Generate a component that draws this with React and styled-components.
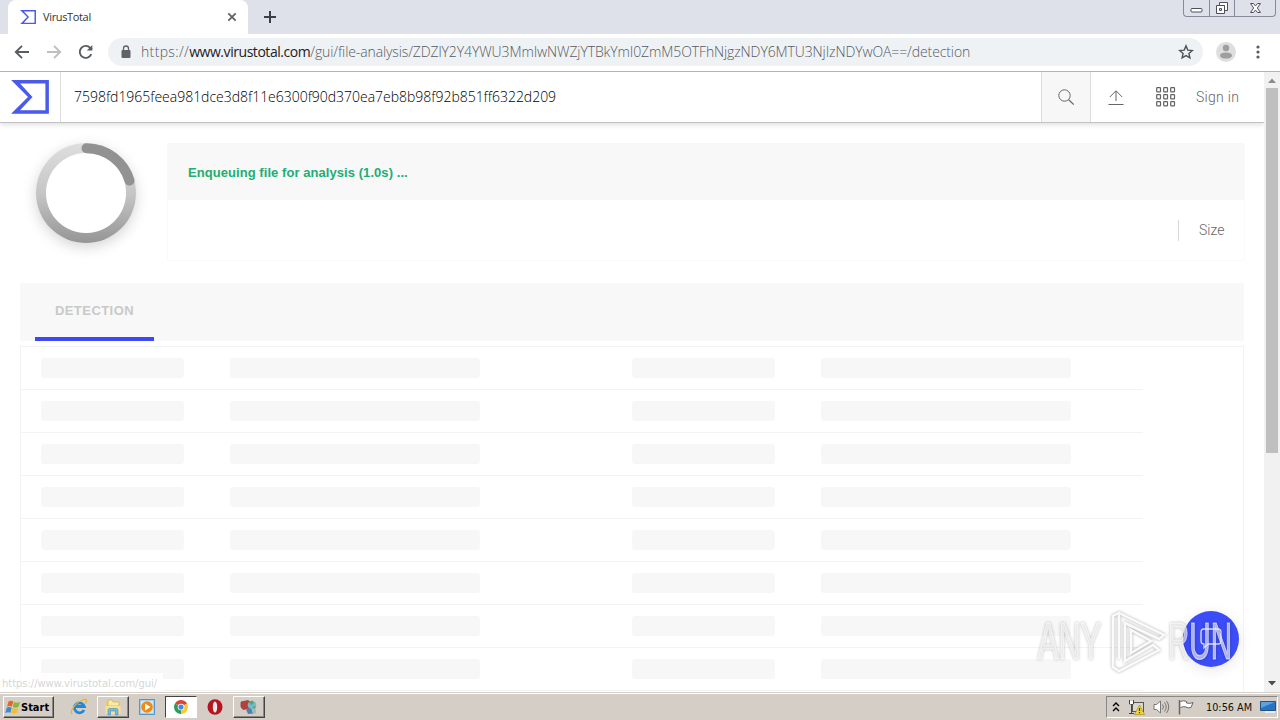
import React from "react";
import styled, { createGlobalStyle } from "styled-components";

function App() {
  const rows = [1, 2, 3, 4, 5, 6, 7, 8];

  return (
    <Screen>
      <GlobalStyle />
      <TabStrip>
        <Tab>
          <VtLogo size={16} />
          <TabTitle>VirusTotal</TabTitle>
          <svg width="10" height="10" viewBox="0 0 10 10">
            <path d="M1.3 1.3l7.4 7.4M8.7 1.3L1.3 8.7" stroke="#5f6368" strokeWidth="1.8" />
          </svg>
        </Tab>
        <NewTab>
          <svg width="12" height="12" viewBox="0 0 12 12">
            <path d="M6 0v12M0 6h12" stroke="#3c4043" strokeWidth="2" />
          </svg>
        </NewTab>
        <WindowButtons>
          <WindowButton $width={25}>
            <svg width="13" height="16" viewBox="0 0 13 16">
              <rect x="1" y="8.5" width="11" height="3.5" rx="1" fill="#fff" stroke="#4c505c" />
            </svg>
          </WindowButton>
          <WindowButton $width={25}>
            <svg width="14" height="16" viewBox="0 0 14 16" fill="#fff" stroke="#4c505c">
              <path d="M4.5 2.5h8v8h-3v-5h-5z" />
              <path fillRule="evenodd" d="M1.500 5.500h8v8h-8zM4.500 8.500h2v2h-2z" />
            </svg>
          </WindowButton>
          <WindowButton $width={41}>
            <svg width="13" height="16" viewBox="0 0 13 16">
              <path d="M1.500 3.500h3l2 2.500 2-2.500h3l-3.200 4.500 3.200 4.500h-3l-2-2.500-2 2.500h-3l3.200-4.500z" fill="#fff" stroke="#4c505c" />
            </svg>
          </WindowButton>
        </WindowButtons>
      </TabStrip>

      <Toolbar>
        <NavIcon $color="#5a5d60">
          <path d="M15 8H2M8 1.800L1.800 8 8 14.200" />
        </NavIcon>
        <NavIcon $color="#bdbfc1">
          <path d="M1 8h13M8 1.800L14.200 8 8 14.200" />
        </NavIcon>
        <NavIcon $color="#5a5d60">
          <path d="M13.300 10.200A6 6 0 1 1 12.200 3.800L14 5.500" />
          <path d="M14.300 1v5.500H8.800z" fill="#5a5d60" stroke="none" />
        </NavIcon>
        <AddressBar>
          <svg width="10" height="14" viewBox="0 0 10 14">
            <rect x="0.500" y="5" width="9" height="8" rx="1" fill="#5f6368" />
            <path d="M2.500 5.500V3.500a2.500 2.500 0 0 1 5 0v2" fill="none" stroke="#5f6368" strokeWidth="1.300" />
          </svg>
          <Url>
            <i>https://</i><b>www.virustotal.com</b>/gui/file-analysis/ZDZlY2Y4YWU3MmIwNWZjYTBkYmI0ZmM5OTFhNjgzNDY6MTU3NjIzNDYwOA==/detection
          </Url>
          <svg width="16" height="16" viewBox="0 0 16 16">
            <path d="M8 1.900l1.800 4.200 4.500.4-3.400 3 1 4.400L8 11.600l-3.900 2.300 1-4.400-3.400-3 4.500-.4z" fill="none" stroke="#4f5357" strokeWidth="1.400" />
          </svg>
        </AddressBar>
        <svg width="20" height="20" viewBox="0 0 20 20">
          <circle cx="10" cy="10" r="10" fill="#dedede" />
          <circle cx="10" cy="6" r="3.200" fill="#9e9e9e" />
          <ellipse cx="10" cy="13.500" rx="6" ry="3.100" fill="#9e9e9e" />
        </svg>
        <MenuDots viewBox="0 0 4 14">
          <circle cx="2" cy="2" r="1.600" />
          <circle cx="2" cy="7" r="1.600" />
          <circle cx="2" cy="12" r="1.600" />
        </MenuDots>
      </Toolbar>

      <Viewport>
        <Page>
          <Header>
            <LogoBox>
              <VtLogo size={38} />
            </LogoBox>
            <Hash>7598fd1965feea981dce3d8f11e6300f90d370ea7eb8b98f92b851ff6322d209</Hash>
            <SearchBox>
              <svg width="16" height="16" viewBox="0 0 16 16" fill="none" stroke="#666">
                <circle cx="6.500" cy="6.500" r="5.700" />
                <path d="M10.700 10.700l5 4.800" strokeWidth="1.200" />
              </svg>
            </SearchBox>
            <HeaderLinks>
              <svg width="16" height="16" viewBox="0 0 16 16" fill="none" stroke="#666">
                <path d="M8 12V2M1.800 8L8 1.800 14.200 8M.5 15.500h15" />
              </svg>
              <AppsIcon />
              <SignIn>Sign in</SignIn>
            </HeaderLinks>
          </Header>

          <Summary>
            <Spinner>
              <svg width="100" height="100" viewBox="0 0 100 100" fill="none">
                <path d="M50.500 5.200A45 45 0 0 1 93.500 37.500" stroke="#929292" strokeWidth="10" strokeLinecap="round" />
              </svg>
            </Spinner>
            <FileCard>
              <Status>Enqueuing file for analysis (1.0s) ...</Status>
              <FileInfo>
                <Size>Size</Size>
              </FileInfo>
            </FileCard>
          </Summary>

          <Tabs>
            <DetectionTab>DETECTION</DetectionTab>
          </Tabs>

          <Table>
            {rows.map((row) => (
              <Row key={row}>
                <Bar $width={143} />
                <Bar $width={250} />
                <Bar $width={143} />
                <Bar $width={250} />
              </Row>
            ))}
          </Table>
          <ChatButton>
            <svg width="24" height="22" viewBox="0 0 24 22">
              <path d="M5 1h14q3 0 3 3v9q0 3-3 3H9l-4 4v-4q-3 0-3-3V4q0-3 3-3z" fill="none" stroke="#dfe3ff" strokeWidth="1.300" />
            </svg>
          </ChatButton>
          <LinkHint>https://www.virustotal.com/gui/</LinkHint>
          <Watermark />
        </Page>
        <Scrollbar>
          <svg width="8" height="16" viewBox="0 0 8 16"><path d="M0 11h8L4 6.500z" fill="#8b8b8b" /></svg>
          <Thumb />
          <svg width="8" height="16" viewBox="0 0 8 16"><path d="M0 5h8l-4 4.500z" fill="#4c4c4c" /></svg>
        </Scrollbar>
      </Viewport>

      <Taskbar>
        <StartButton>
          <WindowsFlag />
          Start
        </StartButton>
        <TaskIcons>
          <TaskItem>
            <svg width="18" height="18" viewBox="0 0 18 18" fill="none">
              <path d="M14 12a5 5 0 1 1 .3-3.500H5" stroke="#2387d8" strokeWidth="2.800" />
              <path d="M2 16C-1 13 6 4 14 1.500c3-.8 3 1.500 1.500 4" stroke="#e5b52c" strokeWidth="1.300" />
            </svg>
          </TaskItem>
          <TaskItem $raised>
            <svg width="18" height="18" viewBox="0 0 18 18">
              <path d="M2 3h5l1 2h7v11H2z" fill="#e9cf72" />
              <path d="M4 2h4l1 2h6v4H4z" fill="#f8eca9" stroke="#c9a544" strokeWidth=".6" />
              <path d="M1.500 8h15v8h-15z" fill="#f6e092" />
              <path d="M4 17v-5q0-1.500 1.500-1.500h7Q14 10.500 14 12v5h-2.500v-4h-5v4z" fill="#73bce0" stroke="#4b8db8" strokeWidth=".6" />
            </svg>
          </TaskItem>
          <TaskItem>
            <svg width="16" height="16" viewBox="0 0 16 16">
              <rect x=".5" y=".5" width="15" height="15" fill="#a5cdec" stroke="#5596cc" />
              <rect x="2" y="2" width="12" height="12" fill="#d5e8f5" />
              <circle cx="8" cy="8" r="5.800" fill="#f28a12" />
              <path d="M6 4.600v6.800L11.500 8z" fill="#fff" />
            </svg>
          </TaskItem>
          <TaskItem $pressed>
            <svg width="14" height="14" viewBox="0 0 16 16">
              <path d="M8 8L1.100 4A8 8 0 0 1 14.900 4z" fill="#db4437" />
              <path d="M8 8L14.900 4A8 8 0 0 1 8 16z" fill="#fcc934" />
              <path d="M8 8v8A8 8 0 0 1 1.100 4z" fill="#2b9d55" />
              <circle cx="8" cy="8" r="3.800" fill="#fff" />
              <circle cx="8" cy="8" r="2.900" fill="#4285f4" />
            </svg>
          </TaskItem>
          <TaskItem>
            <svg width="16" height="16" viewBox="0 0 16 16">
              <ellipse cx="8" cy="8" rx="7.500" ry="7.700" fill="#b51420" />
              <ellipse cx="8" cy="8" rx="2.200" ry="5.600" fill="#f1e7e5" />
            </svg>
          </TaskItem>
          <TaskItem $raised>
            <svg width="18" height="18" viewBox="0 0 18 18">
              <path d="M1 4l7-1.500 3 2V10l-8 1.500L1 9z" fill="#b8403a" stroke="#7f4a48" strokeWidth=".8" />
              <circle cx="12" cy="7" r="4.300" fill="#74b9cf" />
              <path d="M9 4l3-1.500L14 5l-3 2zM13 8l3 1-2 2.500z" fill="#58a55c" />
              <path d="M6 11.500l5-1 3 5-6 .5z" fill="#4a83ab" />
              <path d="M12 10.500l4 1v4l-4-1z" fill="#9fb8c4" />
            </svg>
          </TaskItem>
        </TaskIcons>
        <Tray>
          <svg width="8" height="12" viewBox="0 0 8 12">
            <path d="M1 5l3-3 3 3M1 10l3-3 3 3" fill="none" stroke="#000" strokeWidth="1.400" />
          </svg>
          <svg width="17" height="16" viewBox="0 0 17 16">
            <rect x="4.500" y="3.500" width="11" height="9" fill="#d8d8cc" stroke="#555" />
            <path d="M1.500 1v4h4V1M3.500 5v9M1 14.500h5" fill="none" stroke="#444" />
            <path d="M2 2h3v3H2z" fill="#fff" />
            <path d="M11.500 6l5 9.500h-10z" fill="#f5d330" stroke="#9b8420" strokeWidth=".6" />
            <path d="M11.500 9v3M11.500 13v1.200" stroke="#333" strokeWidth="1.200" />
          </svg>
          <svg width="17" height="16" viewBox="0 0 17 16" fill="none" stroke="#777">
            <path d="M1 5.500h2.500L7.500 2v12l-4-3.500H1z" fill="#fff" />
            <path d="M9.500 5.500q2 2.500 0 5M11.500 3.500q3.500 4.500 0 9M13.500 2q4.500 6 0 12" />
          </svg>
          <svg width="17" height="16" viewBox="0 0 17 16" fill="#fff" stroke="#666">
            <path d="M2.500 2.500q3-1.500 6 0v1.500q3 1 6.500-.5l-2 5q-3 1-5-.5-2.500-1-5.500.5" />
            <path d="M1.500 1v14.500" strokeWidth="1.500" />
          </svg>
          <Clock>10:56 AM</Clock>
          <svg width="16" height="16" viewBox="0 0 16 16">
            <path d="M.5 2.500h15v9H.5z" fill="#2674c5" stroke="#28527e" />
            <path d="M1 3h14L1 9z" fill="#5ba3df" />
            <path d="M5 12h10v2H5z" fill="#e9edf2" />
          </svg>
        </Tray>
      </Taskbar>
    </Screen>
  );
}

function VtLogo({ size }) {
  return (
    <svg width={size} height={size * 0.89} viewBox="0 0 38 34">
      <path d="M0 0h38v34H0l17-17zM9 3.500L21.500 17 9 30.500H34.500V3.500z" fill="#4a5aec" fillRule="evenodd" />
    </svg>
  );
}

function AppsIcon() {
  const cells = [0.7, 7.7, 14.7];
  return (
    <svg width="20" height="20" viewBox="0 0 20 20" fill="none" stroke="#626262" strokeWidth="1.200">
      {cells.map((y) => cells.map((x) => <rect key={x + "-" + y} x={x} y={y} width="3.800" height="4.200" rx=".6" />))}
    </svg>
  );
}

function WindowsFlag() {
  return (
    <svg width="16" height="15" viewBox="0 0 16 15">
      <path d="M3.500 1.500Q6 0 8.300 1.500L7 6.500Q4.500 5.300 2 6.700z" fill="#e8642b" />
      <path d="M9 2q2.500 1.500 6 0l-1.600 5q-3 1.300-5.600 0z" fill="#84b840" />
      <path d="M1.700 7.700q2.500-1.200 5 0l-1.300 5Q3 11.500.3 13z" fill="#3b8bd0" />
      <path d="M7.500 8q2.800 1.300 5.700 0l-1.500 5q-3 1.300-5.500 0z" fill="#f3bd2f" />
    </svg>
  );
}

function Watermark() {
  return (
    <WatermarkSvg viewBox="0 0 200 64">
      <text x="2" y="50.500" textLength="63" lengthAdjust="spacingAndGlyphs">ANY</text>
      <path d="M77 54V8l6-3v46M83 5l45 22-5 4-34-16v38l28-16 6 5-40 21-6-4V14" />
      <path d="M95 22l20 11-20 12z" />
      <text x="132" y="50.500" textLength="64" lengthAdjust="spacingAndGlyphs">RUN</text>
    </WatermarkSvg>
  );
}

export default App;

const GlobalStyle = createGlobalStyle`
  * {
    box-sizing: border-box;
  }
  body {
    margin: 0;
    overflow: hidden;
    font-family: "Liberation Sans", Arial, sans-serif;
  }
  svg {
    display: block;
    flex-shrink: 0;
  }
`;

const Screen = styled.div`
  display: flex;
  flex-direction: column;
  width: 1280px;
  height: 720px;
  background: #fff;
`;

const TabStrip = styled.div`
  display: flex;
  height: 34px;
  padding-left: 8px;
  background: #dee1e9;
`;

const Tab = styled.div`
  display: flex;
  align-items: center;
  width: 240px;
  padding: 0 11px 0 12px;
  border-radius: 8px 8px 0 0;
  background: #fff;
  box-shadow: 0 8px 0 #fff;
`;

const TabTitle = styled.div`
  flex: 1;
  margin-left: 7px;
  font-family: "Open Sans", sans-serif;
  font-size: 11px;
  letter-spacing: -0.35px;
  line-height: 14px;
  color: #333;
`;

const NewTab = styled.div`
  display: flex;
  align-items: center;
  margin-left: 16px;
`;

const WindowButtons = styled.div`
  display: flex;
  height: 17px;
  margin-left: auto;
  margin-right: 4px;
  border: 1px solid #858b98;
  border-top: none;
  border-radius: 0 0 4px 4px;
`;

const WindowButton = styled.div`
  display: flex;
  justify-content: center;
  width: ${(props) => props.$width}px;
  & + & {
    border-left: 1px solid #858b98;
  }
`;

const Toolbar = styled.div`
  display: flex;
  align-items: center;
  height: 38px;
  padding: 0 20px 2px 14px;
  border-bottom: 1px solid #b4b4b4;
  background: #fff;
  z-index: 1;
`;

const NavIcon = styled.svg.attrs({ viewBox: "0 0 16 16" })`
  width: 16px;
  height: 16px;
  margin-right: 16px;
  fill: none;
  stroke: ${(props) => props.$color};
  stroke-width: 1.9;
`;

const AddressBar = styled.div`
  display: flex;
  align-items: center;
  flex: 1;
  height: 28px;
  margin-right: 13px;
  margin-left: -2px;
  padding: 0 9px 0 13px;
  border-radius: 14px;
  background: #eff2f5;
`;

const Url = styled.div`
  flex: 1;
  margin-left: 10px;
  font-family: "Open Sans", sans-serif;
  font-size: 14px;
  font-weight: 300;
  letter-spacing: -0.11px;
  line-height: 20px;
  white-space: nowrap;
  color: #555a5f;
  > i {
    font-style: normal;
    letter-spacing: 0.35px;
  }
  > b {
    font-weight: 400;
    letter-spacing: -0.45px;
    color: #202124;
  }
`;

const MenuDots = styled.svg`
  width: 4px;
  height: 14px;
  margin-left: 20px;
  fill: #5a5d60;
`;

const Viewport = styled.div`
  display: flex;
  height: 620px;
`;

const Page = styled.div`
  position: relative;
  width: 1264px;
  height: 620px;
  overflow: hidden;
`;

const Header = styled.header`
  display: flex;
  height: 51px;
  border-bottom: 1px solid #c2c2c2;
  box-shadow: 0 2px 5px rgba(0, 0, 0, 0.12);
`;

const LogoBox = styled.div`
  display: flex;
  align-items: center;
  width: 61px;
  padding-left: 11px;
  border-right: 1px solid #dedede;
`;

const Hash = styled.div`
  flex: 1;
  padding-left: 13px;
  font-family: "Open Sans", sans-serif;
  font-size: 14px;
  font-weight: 300;
  letter-spacing: -0.02px;
  line-height: 50px;
  color: #000;
`;

const SearchBox = styled.div`
  display: flex;
  align-items: center;
  justify-content: center;
  width: 50px;
  border-left: 1px solid #dedede;
  border-right: 1px solid #dedede;
  background: #f7f7f7;
`;

const HeaderLinks = styled.div`
  display: flex;
  align-items: center;
  width: 173px;
  padding-left: 17px;
  gap: 32px;
`;

const SignIn = styled.div`
  margin-left: -12px;
  font-family: Roboto, sans-serif;
  font-size: 14px;
  font-weight: 300;
  letter-spacing: 0.3px;
  color: #666;
`;

const Summary = styled.section`
  display: flex;
  gap: 31px;
  padding: 20px 19px 0 36px;
`;

const Spinner = styled.div`
  width: 100px;
  height: 100px;
  border-radius: 50%;
  background:
    radial-gradient(circle, #fff 39.500px, transparent 40.500px),
    linear-gradient(#dfdfdf, #c6c6c6 50%, #959595);
  box-shadow: 0 4px 14px rgba(0, 0, 0, 0.17);
`;

const FileCard = styled.div`
  flex: 1;
  height: 118px;
  border: 1px solid #fafafa;
  border-top: none;
`;

const Status = styled.div`
  height: 57px;
  margin: 0 -1px;
  padding-left: 21px;
  background: #f8f8f8;
  font-size: 13px;
  font-weight: bold;
  letter-spacing: 0.06px;
  line-height: 59px;
  color: #22ad74;
`;

const FileInfo = styled.div`
  display: flex;
  justify-content: flex-end;
  padding: 20px 19px 0;
`;

const Size = styled.div`
  width: 47px;
  height: 21px;
  padding-left: 20px;
  border-left: 1px solid #d8d8d8;
  font-family: Roboto, sans-serif;
  font-size: 14px;
  font-weight: 300;
  line-height: 20px;
  color: #666;
`;

const Tabs = styled.nav`
  display: flex;
  height: 58px;
  margin: 22px 20px 0;
  padding-left: 15px;
  border-radius: 2px;
  background: #f8f8f8;
`;

const DetectionTab = styled.div`
  width: 119px;
  border-bottom: 4px solid #4048f4;
  font-size: 13px;
  font-weight: bold;
  letter-spacing: 0.45px;
  line-height: 55px;
  text-align: center;
  color: #c9c9c9;
`;

const Table = styled.div`
  height: 400px;
  margin: 5px 20px 0;
  border: 1px solid #f3f3f3;
`;

const Row = styled.div`
  display: grid;
  grid-template-columns: 189px 402px 189px 250px;
  width: 1122px;
  height: 43px;
  padding: 11px 20px 0;
  border-bottom: 1px solid #f3f3f3;
`;

const Bar = styled.div`
  width: ${(props) => props.$width}px;
  height: 20px;
  border-radius: 3px;
  background: #f7f7f7;
`;

const ChatButton = styled.div`
  position: absolute;
  right: 25px;
  bottom: 25px;
  display: flex;
  align-items: center;
  justify-content: center;
  width: 56px;
  height: 56px;
  border-radius: 50%;
  background: #3b4cf8;
  box-shadow: 0 3px 14px rgba(0, 0, 0, 0.1);
`;

const LinkHint = styled.div`
  position: absolute;
  left: 0;
  bottom: 0;
  width: 163px;
  height: 19px;
  padding-left: 2px;
  background: rgba(255, 255, 255, 0.8);
  font-family: "DejaVu Sans", sans-serif;
  font-size: 10px;
  letter-spacing: -0.05px;
  line-height: 21px;
  white-space: nowrap;
  color: #d6d6d6;
`;

const WatermarkSvg = styled.svg`
  position: absolute;
  left: 1036px;
  top: 536px;
  width: 200px;
  height: 64px;
  overflow: visible;
  font-family: "Liberation Sans", Arial, sans-serif;
  font-size: 52px;
  fill: rgba(255, 255, 255, 0.6);
  stroke: rgba(255, 255, 255, 0.6);
  stroke-width: 1.2;
  filter: drop-shadow(0 0 1.5px rgba(0, 0, 0, 0.38));
  > path {
    fill: none;
    stroke: rgba(255, 255, 255, 0.9);
    stroke-width: 2.5;
  }
`;

const Scrollbar = styled.div`
  display: flex;
  flex-direction: column;
  align-items: center;
  justify-content: space-between;
  width: 16px;
  background: #f1f1f1;
`;

const Thumb = styled.div`
  width: 12px;
  height: 365px;
  margin-bottom: auto;
  background: #bfbfbf;
`;

const Taskbar = styled.footer`
  display: flex;
  align-items: center;
  height: 28px;
  padding: 1px 2px 0 3px;
  border-top: 1px solid #d4d0c8;
  background: #d5cec6;
  box-shadow: inset 0 1px 0 #fff;
`;

const StartButton = styled.div`
  display: flex;
  align-items: center;
  width: 51px;
  height: 22px;
  padding-left: 1px;
  border: 1px solid;
  border-color: #fff #444 #444 #fff;
  box-shadow: inset -1px -1px #8b8781;
  font-family: "DejaVu Sans Condensed", "DejaVu Sans", sans-serif;
  font-size: 11px;
  font-weight: bold;
`;

const TaskIcons = styled.div`
  display: flex;
  align-items: center;
  gap: 2px;
  margin-left: 9px;
`;

const TaskItem = styled.div`
  display: flex;
  align-items: center;
  justify-content: center;
  width: 32px;
  height: 22px;
  border: 1px solid transparent;
  ${(props) => props.$raised && "border-color: #fff #444 #444 #fff; box-shadow: inset -1px -1px #8b8781;"}
  ${(props) => props.$pressed && "border-color: #444 #fff #fff #444; background: #fff;"}
`;

const Tray = styled.div`
  display: flex;
  align-items: center;
  gap: 8px;
  width: 172px;
  height: 22px;
  margin-left: auto;
  padding-left: 5px;
  border: 1px solid;
  border-color: #888 #fff #fff #888;
`;

const Clock = styled.div`
  width: 46px;
  margin-left: 3px;
  font-family: "DejaVu Sans Condensed", "DejaVu Sans", sans-serif;
  font-size: 10.800px;
  white-space: nowrap;
  color: #111;
`;
